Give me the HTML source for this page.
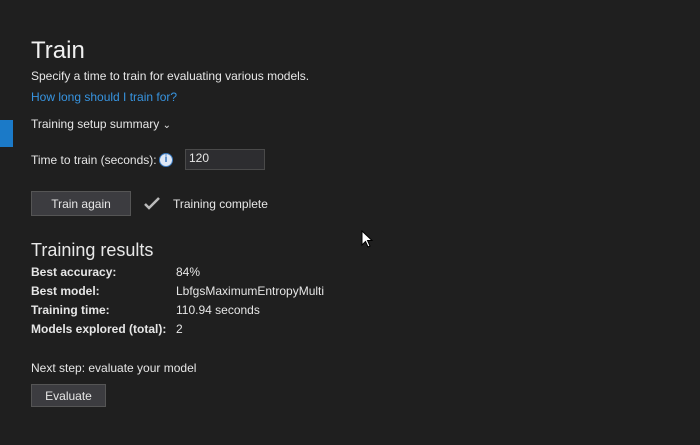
<!DOCTYPE html>
<html><head><style>
body{margin:0;width:700px;height:445px;background:#1f1f1f;color:#e6e6e6;font-family:"Liberation Sans",sans-serif;font-size:12px;position:relative;overflow:hidden}
.a{position:absolute;white-space:nowrap;line-height:14px}
.btn{position:absolute;background:#3c3c40;border:1px solid #555;color:#e6e6e6;text-align:center;box-sizing:border-box}
b{font-weight:bold}
</style></head><body>
<div class="a" style="left:31px;top:38px;font-size:24px;line-height:26px;color:#f0f0f0">Train</div>
<div class="a" style="left:31px;top:69px">Specify a time to train for evaluating various models.</div>
<div class="a" style="left:31px;top:90px;color:#3794e0">How long should I train for?</div>
<div style="position:absolute;left:0;top:120px;width:13px;height:27px;background:#1b7ac8"></div>
<div class="a" style="left:31px;top:117px">Training setup summary <span style="font-size:10px">&#8964;</span></div>
<div class="a" style="left:31px;top:153px">Time to train (seconds):</div>
<div style="position:absolute;left:159px;top:153px;width:14px;height:14px;border-radius:50%;background:#dfe8f5;border:1px solid #3a7ac0;box-sizing:border-box;color:#2c6cb8;font-weight:bold;font-size:10px;text-align:center;line-height:12px">i</div>
<div style="position:absolute;left:185px;top:149px;width:80px;height:21px;background:#2d2d30;border:1px solid #4a4a4a;box-sizing:border-box"></div>
<div class="a" style="left:189px;top:151px">120</div>
<div class="btn" style="left:31px;top:191px;width:100px;height:25px;line-height:25px">Train again</div>
<svg style="position:absolute;left:144px;top:197px" width="16" height="13"><path d="M1 7 L5 11 L15 1" stroke="#bbb" stroke-width="2.5" fill="none"/></svg>
<div class="a" style="left:173px;top:197px">Training complete</div>
<div class="a" style="left:31px;top:240px;font-size:18px;line-height:20px;color:#e8e8e8">Training results</div>
<div class="a" style="left:31px;top:265px"><b>Best accuracy:</b></div><div class="a" style="left:176px;top:265px">84%</div>
<div class="a" style="left:31px;top:284px"><b>Best model:</b></div><div class="a" style="left:176px;top:284px">LbfgsMaximumEntropyMulti</div>
<div class="a" style="left:31px;top:303px"><b>Training time:</b></div><div class="a" style="left:176px;top:303px">110.94 seconds</div>
<div class="a" style="left:31px;top:322px"><b>Models explored (total):</b></div><div class="a" style="left:176px;top:322px">2</div>
<div class="a" style="left:31px;top:361px">Next step: evaluate your model</div>
<div class="btn" style="left:31px;top:384px;width:75px;height:23px;line-height:23px">Evaluate</div>
<svg style="position:absolute;left:361px;top:230px" width="13" height="19"><path d="M1 1 L1 15 L4.5 11.5 L7 17 L9 16 L6.5 10.5 L11 10.5 Z" fill="#fff" stroke="#000" stroke-width="1"/></svg>
</body></html>
